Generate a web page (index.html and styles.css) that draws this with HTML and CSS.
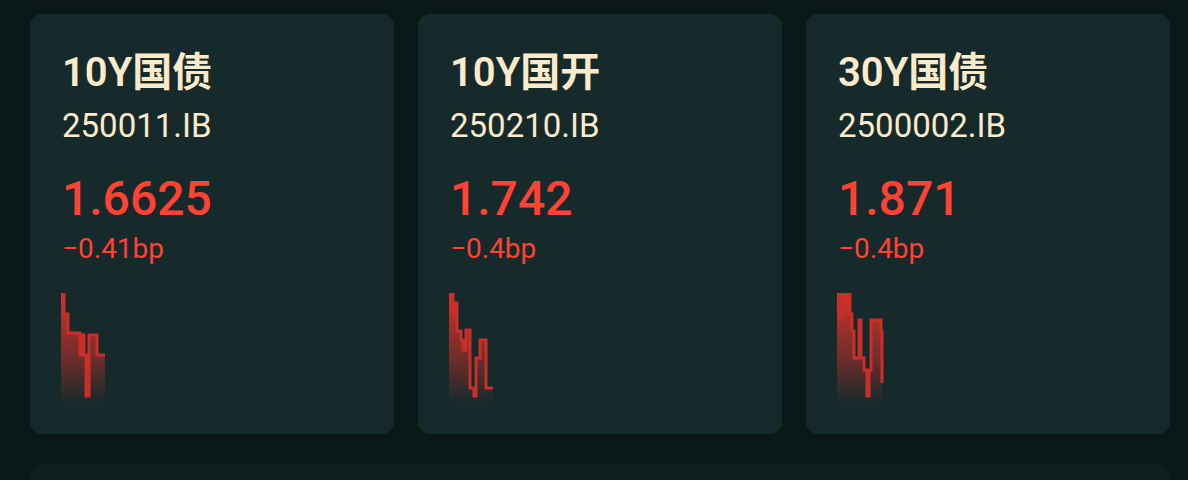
FILE: index.html
```html
<!DOCTYPE html>
<html lang="zh-CN">
<head>
<meta charset="utf-8">
<title>Bonds</title>
<link rel="stylesheet" href="styles.css">
</head>
<body>
<main class="page">
  <section class="cards">
    <article class="card">
      <h2 class="name">10Y国债</h2>
      <div class="code">250011.IB</div>
      <div class="yield">1.6625</div>
      <div class="change">−0.41bp</div>
      <svg class="spark" width="48" height="110" viewBox="0 0 48 110">
        <defs>
          <linearGradient id="g1" x1="0" y1="0" x2="0" y2="1">
            <stop offset="0" stop-color="#d8332b" stop-opacity="1"/>
            <stop offset="0.6" stop-color="#b53029" stop-opacity="0.55"/>
            <stop offset="1" stop-color="#b53029" stop-opacity="0"/>
          </linearGradient>
        </defs>
        <path d="M1,0 H4 V21 H8 V40 H20 V62 H23 V42 H24 V62 H26 V103 H29 V42 H37 V62 H45 V110 H1 Z" fill="url(#g1)"/>
        <path d="M1,0 H4 V21 H8 V40 H20 V62 H23 V42 H24 V62 H26 V103 H29 V42 H37 V62 H45" fill="none" stroke="#c92e29" stroke-width="3"/>
      </svg>
    </article>
    <article class="card">
      <h2 class="name">10Y国开</h2>
      <div class="code">250210.IB</div>
      <div class="yield">1.742</div>
      <div class="change">−0.4bp</div>
      <svg class="spark" width="48" height="110" viewBox="0 0 48 110">
        <defs>
          <linearGradient id="g2" x1="0" y1="0" x2="0" y2="1">
            <stop offset="0" stop-color="#d8332b" stop-opacity="1"/>
            <stop offset="0.6" stop-color="#b53029" stop-opacity="0.55"/>
            <stop offset="1" stop-color="#b53029" stop-opacity="0"/>
          </linearGradient>
        </defs>
        <path d="M1,0 H5 V21 H7 V10 H9 V38 H13 V47 H15 V57 H18 V37 H22 V95 H26 V103 H28 V65 H32 V47 H38 V95 H45 V110 H1 Z" fill="url(#g2)"/>
        <path d="M1,0 H5 V21 H7 V10 H9 V38 H13 V47 H15 V57 H18 V37 H22 V95 H26 V103 H28 V65 H32 V47 H38 V95 H45" fill="none" stroke="#c92e29" stroke-width="3"/>
      </svg>
    </article>
    <article class="card">
      <h2 class="name">30Y国债</h2>
      <div class="code">2500002.IB</div>
      <div class="yield">1.871</div>
      <div class="change">−0.4bp</div>
      <svg class="spark" width="48" height="110" viewBox="0 0 48 110">
        <defs>
          <linearGradient id="g3" x1="0" y1="0" x2="0" y2="1">
            <stop offset="0" stop-color="#d8332b" stop-opacity="1"/>
            <stop offset="0.6" stop-color="#b53029" stop-opacity="0.55"/>
            <stop offset="1" stop-color="#b53029" stop-opacity="0"/>
          </linearGradient>
        </defs>
        <path d="M1,0 H3 V25 H6 V1 H14 V21 H16 V38 H18 V65 H23 V27 H25 V65 H28 V77 H31 V103 H33 V77 H35 V27 H45 V38 H46 V90 V110 H1 Z" fill="url(#g3)"/>
        <path d="M1,0 H3 V25 H6 V1 H14 V21 H16 V38 H18 V65 H23 V27 H25 V65 H28 V77 H31 V103 H33 V77 H35 V27 H45 V38 H46 V90" fill="none" stroke="#c92e29" stroke-width="3"/>
      </svg>
    </article>
  </section>
  <section class="panel"></section>
</main>
</body>
</html>
```
FILE: styles.css
```css
html, body {
  margin: 0;
  padding: 0;
  background: #0a1817;
}
body {
  font-family: Roboto, "Noto Sans CJK SC", sans-serif;
  color: #fcebca;
}
.page {
  padding: 14px 18px 0 30px;
  display: flex;
  flex-direction: column;
  gap: 30px;
}
.cards {
  display: grid;
  grid-template-columns: repeat(3, 1fr);
  gap: 24px;
}
.card {
  background: #172a2b;
  border-radius: 12px;
  height: 420px;
  box-sizing: border-box;
  padding: 35px 32px 0 32px;
  display: flex;
  flex-direction: column;
}
.name {
  margin: 0;
  font-family: Roboto, "Noto Sans CJK SC", sans-serif;
  font-weight: 600;
  font-size: 40px;
  line-height: 48px;
  color: #fcebca;
}
.code {
  font-size: 33px;
  line-height: 44px;
  margin-top: 7px;
}
.yield {
  margin-top: 23px;
  font-size: 48px;
  font-weight: 500;
  line-height: 56px;
  color: #ff4234;
}
.change {
  font-size: 28px;
  line-height: 36px;
  color: #ff4234;
  margin-top: 4px;
}
.spark {
  display: block;
  margin-top: 26px;
  margin-left: -2px;
}
.panel {
  height: 60px;
  background: #101e1d;
  border-radius: 12px;
}
```
